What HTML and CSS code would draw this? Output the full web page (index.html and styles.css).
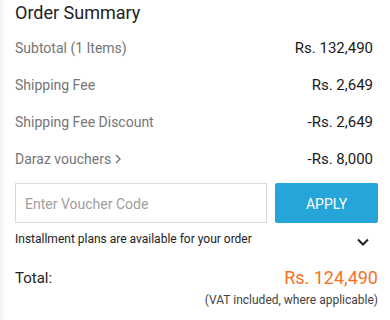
FILE: index.html
```html
<!DOCTYPE html>
<html>
<head>
<meta charset="utf-8">
<link rel="stylesheet" href="styles.css">
</head>
<body>
<div class="page">
  <div class="card">
    <h2 class="title">Order Summary</h2>
    <div class="row">
      <span class="label">Subtotal (1 Items)</span>
      <span class="value">Rs. 132,490</span>
    </div>
    <div class="row">
      <span class="label">Shipping Fee</span>
      <span class="value">Rs. 2,649</span>
    </div>
    <div class="row">
      <span class="label">Shipping Fee Discount</span>
      <span class="value">-Rs. 2,649</span>
    </div>
    <div class="row">
      <span class="label link">Daraz vouchers
        <svg class="arrow" width="8" height="12" viewBox="0 0 8 12"><path d="M2 2 L6 6 L2 10" fill="none" stroke="#757575" stroke-width="1.4"/></svg>
      </span>
      <span class="value">-Rs. 8,000</span>
    </div>
    <div class="voucher">
      <input class="code" type="text" placeholder="Enter Voucher Code">
      <button class="apply">APPLY</button>
    </div>
    <div class="installment">
      <span>Installment plans are available for your order</span>
      <svg class="chev" width="12" height="8" viewBox="0 0 12 8"><path d="M1 1.5 L6 6.5 L11 1.5" fill="none" stroke="#212121" stroke-width="2"/></svg>
    </div>
    <div class="total">
      <span class="total-label">Total:</span>
      <span class="total-value">Rs. 124,490</span>
    </div>
    <div class="vat">(VAT included, where applicable)</div>
  </div>
</div>
</body>
</html>
```

FILE: styles.css
```css
* { box-sizing: border-box; }
html, body { margin: 0; padding: 0; }
body {
  background: #f4f4f4;
  font-family: Roboto, "Liberation Sans", sans-serif;
  width: 390px;
  height: 320px;
  overflow: hidden;
}
.page { padding-left: 3px; height: 320px; }
.card {
  background: #fff;
  height: 320px;
  padding: 2px 12px 0 12px;
}
.title {
  margin: 0 0 6px 0;
  font-size: 18px;
  font-weight: 400;
  line-height: 21px;
  color: #212121;
}
.row {
  display: flex;
  justify-content: space-between;
  align-items: center;
  height: 37px;
  padding-right: 5px;
}
.label {
  font-size: 14px;
  line-height: 16px;
  color: #757575;
  display: flex;
  align-items: center;
  gap: 3px;
}
.value {
  font-size: 15px;
  line-height: 16px;
  color: #1a1a1a;
}
.arrow { display: block; }
.voucher {
  display: flex;
  gap: 8px;
  margin-top: 6px;
  height: 40px;
}
.code {
  flex: 1;
  height: 40px;
  border: 1px solid #dadada;
  border-radius: 0;
  padding: 2px 9px 0 9px;
  font-family: Roboto, "Liberation Sans", sans-serif;
  font-size: 14px;
  color: #212121;
  outline: none;
}
.code::placeholder { color: #9e9e9e; }
.apply {
  width: 103px;
  height: 40px;
  border: none;
  border-radius: 2px;
  background: #26a5d8;
  color: #fff;
  font-family: Roboto, "Liberation Sans", sans-serif;
  font-size: 14px;
  padding: 2px 0 0 0;
}
.installment {
  display: flex;
  justify-content: space-between;
  align-items: center;
  margin-top: 8px;
  font-size: 12px;
  line-height: 16px;
  color: #212121;
  padding-right: 9px;
}
.chev { display: block; margin-top: 6px; }
.total {
  display: flex;
  justify-content: space-between;
  align-items: center;
  margin-top: 21px;
}
.total-label {
  font-size: 15px;
  line-height: 20px;
  color: #212121;
}
.total-value {
  font-size: 18px;
  line-height: 20px;
  color: #f57224;
}
.vat {
  text-align: right;
  font-size: 12px;
  line-height: 14px;
  color: #424242;
  margin-top: 5px;
}
```
